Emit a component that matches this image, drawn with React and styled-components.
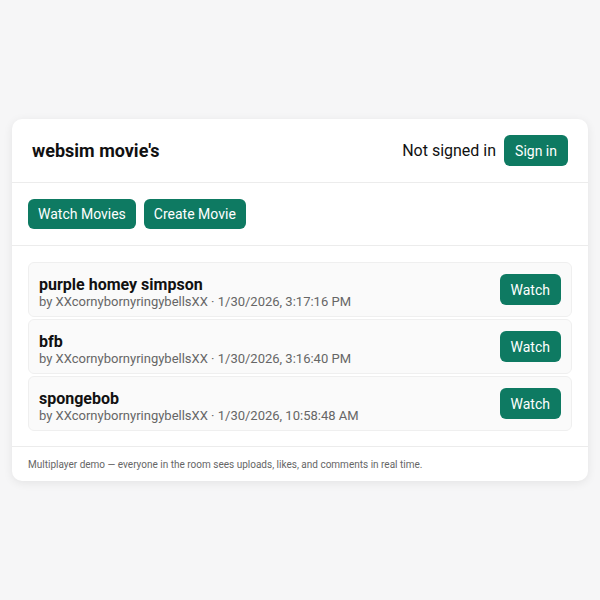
import React from "react";
import styled, { createGlobalStyle } from "styled-components";

const Global = createGlobalStyle`
  html, body { margin: 0; padding: 0; background: #f6f6f7; }
  body { font-family: Roboto, "Noto Sans", Arial, sans-serif; color: #111; }
`;

const Page = styled.div`
  width: 600px;
  height: 600px;
  display: flex;
  align-items: center;
  justify-content: center;
  box-sizing: border-box;
  padding: 0 12px;
`;

const Card = styled.div`
  width: 100%;
  background: #fff;
  border-radius: 10px;
  box-shadow: 0 2px 10px rgba(0, 0, 0, 0.08);
  overflow: hidden;
`;

const Header = styled.div`
  display: flex;
  align-items: center;
  justify-content: space-between;
  height: 63px;
  padding: 0 20px;
  border-bottom: 1px solid #ececec;
`;

const Title = styled.h1`
  margin: 0;
  font-size: 18px;
  font-weight: 700;
  color: #111;
`;

const Auth = styled.div`
  display: flex;
  align-items: center;
  gap: 8px;
  font-size: 16px;
  color: #111;
`;

const Button = styled.button`
  border: none;
  background: #0e7a62;
  color: #fff;
  font-family: Roboto, "Noto Sans", Arial, sans-serif;
  font-size: 14px;
  border-radius: 6px;
  height: ${(p) => p.$h || 31}px;
  padding: 0 ${(p) => p.$px || 11}px;
  cursor: pointer;
`;

const Tabs = styled.div`
  display: flex;
  gap: 8px;
  padding: 16px;
  border-bottom: 1px solid #ececec;
`;

const List = styled.div`
  display: flex;
  flex-direction: column;
  gap: 2px;
  padding: 16px 16px 15px;
  border-bottom: 1px solid #ececec;
`;

const Item = styled.div`
  display: flex;
  align-items: center;
  justify-content: space-between;
  height: 55px;
  box-sizing: border-box;
  padding: 0 10px;
  background: #fafafa;
  border: 1px solid #efefef;
  border-radius: 6px;
`;

const Info = styled.div`
  display: flex;
  flex-direction: column;
  margin-top: 5px;
`;

const ItemTitle = styled.div`
  font-size: 16px;
  font-weight: 700;
  line-height: 18px;
  color: #111;
`;

const Meta = styled.div`
  font-size: 13px;
  line-height: 15px;
  color: #666;
`;

const Footer = styled.div`
  padding: 11px 16px 10px;
  font-size: 10px;
  line-height: 13px;
  color: #666;
`;

const movies = [
  { title: "purple homey simpson", date: "1/30/2026, 3:17:16 PM" },
  { title: "bfb", date: "1/30/2026, 3:16:40 PM" },
  { title: "spongebob", date: "1/30/2026, 10:58:48 AM" },
];

export default function App() {
  return (
    <>
      <Global />
      <Page>
        <Card>
          <Header>
            <Title>websim movie's</Title>
            <Auth>
              Not signed in
              <Button>Sign in</Button>
            </Auth>
          </Header>
          <Tabs>
            <Button $px={10} $h={30}>Watch Movies</Button>
            <Button $px={10} $h={30}>Create Movie</Button>
          </Tabs>
          <List>
            {movies.map((m) => (
              <Item key={m.title}>
                <Info>
                  <ItemTitle>{m.title}</ItemTitle>
                  <Meta>by XXcornybornyringybellsXX · {m.date}</Meta>
                </Info>
                <Button>Watch</Button>
              </Item>
            ))}
          </List>
          <Footer>
            Multiplayer demo — everyone in the room sees uploads, likes, and comments in real time.
          </Footer>
        </Card>
      </Page>
    </>
  );
}
